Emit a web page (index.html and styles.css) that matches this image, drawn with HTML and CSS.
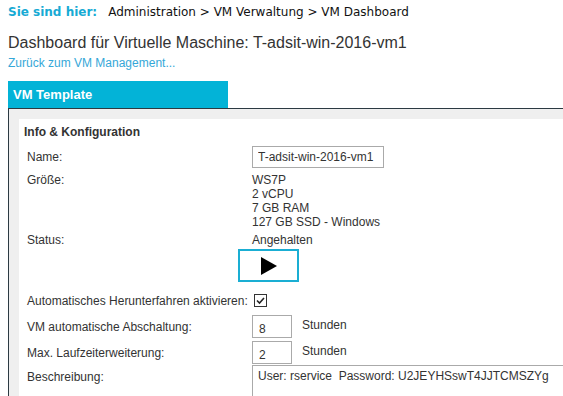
FILE: index.html
```html
<!DOCTYPE html>
<html lang="de">

<head>
    <meta charset="UTF-8">
    <meta name="viewport" content="width=device-width, initial-scale=1.0">
    <link rel="stylesheet" href="styles.css">
</head>

<body>
    <div class="page">
        <div class="breadcrumb">
            <strong class="here">Sie sind hier:</strong>Administration &gt; VM Verwaltung &gt; VM Dashboard
        </div>

        <h1 class="title">Dashboard für Virtuelle Maschine: T-adsit-win-2016-vm1</h1>
        <a class="back-link" href="#">Zurück zum VM Management...</a>

        <div class="tab">VM Template</div>
        <div class="panel">
            <div class="box">
                <h2 class="box-title">Info &amp; Konfiguration</h2>

                <div class="row row-name">
                    <label class="label" for="name">Name:</label>
                    <div><input class="input-name" id="name" type="text" value="T-adsit-win-2016-vm1"></div>
                </div>

                <div class="row row-size">
                    <div class="label">Größe:</div>
                    <div class="value">
                        WS7P<br>
                        2 vCPU<br>
                        7 GB RAM<br>
                        127 GB SSD - Windows
                    </div>
                </div>

                <div class="row row-status">
                    <div class="label">Status:</div>
                    <div class="value">
                        Angehalten
                        <button class="play-btn" type="button">
                            <svg width="16" height="18" viewBox="0 0 16 18">
                                <polygon points="0,0 16,9 0,18" fill="#000" />
                            </svg>
                        </button>
                    </div>
                </div>

                <div class="row row-check">
                    <div class="label">Automatisches Herunterfahren aktivieren:</div>
                    <div>
                        <span class="checkbox">
                            <svg width="11" height="11" viewBox="0 0 11 11">
                                <polyline points="2,5.5 4.5,8 9,3" fill="none" stroke="#222" stroke-width="1.6" />
                            </svg>
                        </span>
                    </div>
                </div>

                <div class="row row-hours">
                    <label class="label" for="shutdown">VM automatische Abschaltung:</label>
                    <div class="hours">
                        <input class="input-hours" id="shutdown" type="text" value="8">
                        <span class="unit">Stunden</span>
                    </div>
                </div>

                <div class="row row-hours">
                    <label class="label" for="extend">Max. Laufzeiterweiterung:</label>
                    <div class="hours">
                        <input class="input-hours" id="extend" type="text" value="2">
                        <span class="unit">Stunden</span>
                    </div>
                </div>

                <div class="row row-desc">
                    <label class="label" for="desc">Beschreibung:</label>
                    <textarea class="input-desc" id="desc">User: rservice  Password: U2JEYHSswT4JJTCMSZYg</textarea>
                </div>
            </div>
        </div>
    </div>
</body>

</html>
```

FILE: styles.css
```css
html,
body {
    overflow: hidden;
}

body {
    margin: 0;
    font-family: "Liberation Sans", Arial, sans-serif;
    font-size: 12px;
    color: #333;
    background-color: #fff;
}

.page {
    padding: 0 0 0 8px;
}

.breadcrumb {
    font-family: "DejaVu Sans", Verdana, sans-serif;
    font-size: 12px;
    line-height: 24px;
    color: #111;
    white-space: nowrap;
}

.here {
    color: #17aad4;
    margin-right: 11px;
}

.title {
    margin: 9px 0 0;
    font-size: 16px;
    font-weight: normal;
    line-height: 20px;
    color: #333;
    white-space: nowrap;
}

.back-link {
    display: block;
    margin-top: 2px;
    line-height: 16px;
    color: #35a7d8;
    text-decoration: none;
}

.tab {
    width: 215px;
    height: 27px;
    margin-top: 10px;
    padding-left: 5px;
    background-color: #03b3d7;
    color: #fff;
    font-size: 13px;
    font-weight: bold;
    line-height: 27px;
}

.panel {
    width: 700px;
    padding: 10px 0 0 10px;
    border-top: 1px solid #2c3a42;
    border-left: 1px solid #2c3a42;
    background-color: #efefef;
}

.box {
    padding: 6px 5px 40px;
    background-color: #fff;
}

.box-title {
    margin: 0;
    font-size: 12px;
    line-height: 15px;
    color: #333;
}

.row {
    display: grid;
    grid-template-columns: 225px 1fr;
    padding-left: 3px;
}

.label {
    line-height: 14px;
}

.value {
    line-height: 14px;
}

.row-name {
    margin-top: 6px;
    align-items: center;
}

.input-name {
    width: 132px;
    height: 22px;
    padding: 0 5px;
    border: 1px solid #aaa;
    box-sizing: border-box;
    font: 12px "Liberation Sans", Arial, sans-serif;
    color: #333;
    outline: none;
}

.row-size {
    margin-top: 5px;
}

.row-status {
    margin-top: 4px;
}

.play-btn {
    display: flex;
    align-items: center;
    justify-content: center;
    width: 61px;
    height: 33px;
    margin: 2px 0 0 -14px;
    padding: 0 0 0 1px;
    border: 2px solid #1aaed3;
    background-color: #fff;
}

.row-check {
    margin-top: 12px;
}

.checkbox {
    display: flex;
    align-items: center;
    justify-content: center;
    width: 13px;
    height: 13px;
    margin: 0 0 0 2px;
    border: 1px solid #333;
    box-sizing: border-box;
}

.row-hours {
    margin-top: 7px;
    align-items: center;
}

.row-hours + .row-hours {
    margin-top: 3px;
}

.hours {
    display: flex;
    align-items: flex-start;
}

.input-hours {
    width: 40px;
    height: 23px;
    padding: 4px 0 0 6px;
    border: 1px solid #aaa;
    box-sizing: border-box;
    font: 12px "Liberation Sans", Arial, sans-serif;
    color: #333;
    outline: none;
}

.unit {
    margin: 3px 0 0 10px;
    line-height: 14px;
}

.row-desc {
    margin-top: 1px;
    align-items: start;
}

.row-desc .label {
    margin-top: 5px;
}

.input-desc {
    width: 380px;
    height: 50px;
    padding: 3px 5px;
    border: 1px solid #aaa;
    box-sizing: border-box;
    font: 12px "Liberation Sans", Arial, sans-serif;
    color: #333;
    resize: none;
    outline: none;
}
```
